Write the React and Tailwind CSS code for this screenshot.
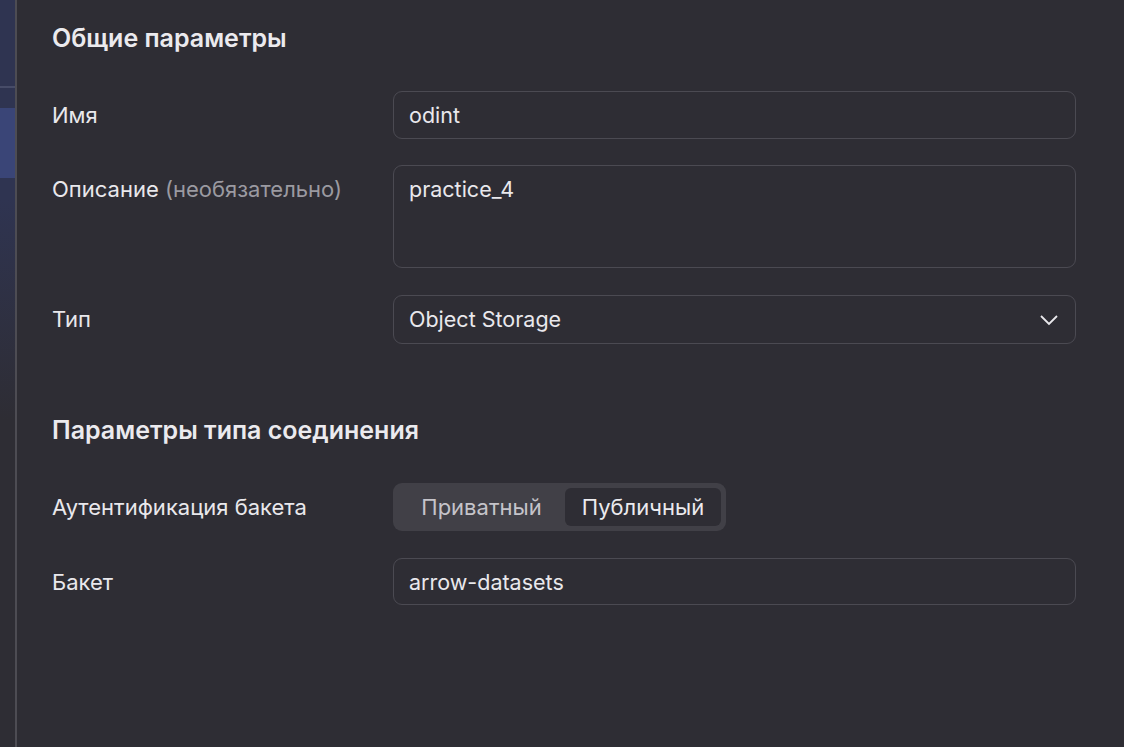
import React from "react";

const font = { fontFamily: "Inter, 'Noto Sans', sans-serif" };

function Row({ label, children, className = "" }) {
  return (
    <div className={"flex items-start " + className}>
      <div className="w-[341px] shrink-0 text-[22px] leading-[26px] text-[#e9e8ec] pt-[11px]">{label}</div>
      <div className="w-[683px]">{children}</div>
    </div>
  );
}

function Input({ value, h = "h-[48px]" }) {
  return (
    <div className={`${h} rounded-[9px] border border-[#4b4a52] px-[15px] py-[10px] text-[21.5px] leading-[26px] text-[#e9e8ec]`}>
      {value}
    </div>
  );
}

export default function App() {
  return (
    <div style={font} className="w-[1124px] h-[747px] bg-[#2e2d34] flex overflow-hidden">
      <div className="w-[15px] shrink-0 flex flex-col bg-[linear-gradient(to_bottom,#2f3451_0px,#2f3451_200px,#2e2d34_420px)]">
        <div className="h-[86px]" />
        <div className="h-[2px] bg-[#474c68]" />
        <div className="h-[20px]" />
        <div className="h-[70px] bg-[#3a4577]" />
      </div>
      <div className="w-[2px] shrink-0 bg-[#4d4c53]" />
      <div className="flex-1 pl-[35px] pt-[23px]">
        <div className="text-[25px] leading-[31px] font-semibold text-[#ebeaee]">Общие параметры</div>
        <Row label="Имя" className="mt-[37px]">
          <Input value="odint" />
        </Row>
        <Row
          label={
            <span>
              Описание <span className="text-[#9b9aa1]">(необязательно)</span>
            </span>
          }
          className="mt-[26px]"
        >
          <Input value="practice_4" h="h-[103px]" />
        </Row>
        <Row label="Тип" className="mt-[27px]">
          <div className="h-[49px] rounded-[9px] border border-[#4b4a52] pl-[15px] pr-[16px] flex items-center justify-between text-[21.5px] text-[#e9e8ec]">
            <span>Object Storage</span>
            <svg width="20" height="12" viewBox="0 0 20 12" fill="none">
              <path d="M2 2l8 8 8-8" stroke="#e9e8ec" strokeWidth="1.8" />
            </svg>
          </div>
        </Row>
        <div className="mt-[71px] text-[25px] leading-[31px] font-semibold text-[#ebeaee]">Параметры типа соединения</div>
        <Row label="Аутентификация бакета" className="mt-[37px]">
          <div className="w-[333px] h-[48px] rounded-[9px] bg-[#414047] p-[5px] flex text-[22px]">
            <div className="flex-1 flex items-center justify-center text-[#c5c4ca]">Приватный</div>
            <div className="w-[156px] rounded-[6px] bg-[#2e2d34] flex items-center justify-center text-[#ebeaee]">Публичный</div>
          </div>
        </Row>
        <Row label="Бакет" className="mt-[27px]">
          <Input value="arrow-datasets" h="h-[47px]" />
        </Row>
      </div>
    </div>
  );
}
